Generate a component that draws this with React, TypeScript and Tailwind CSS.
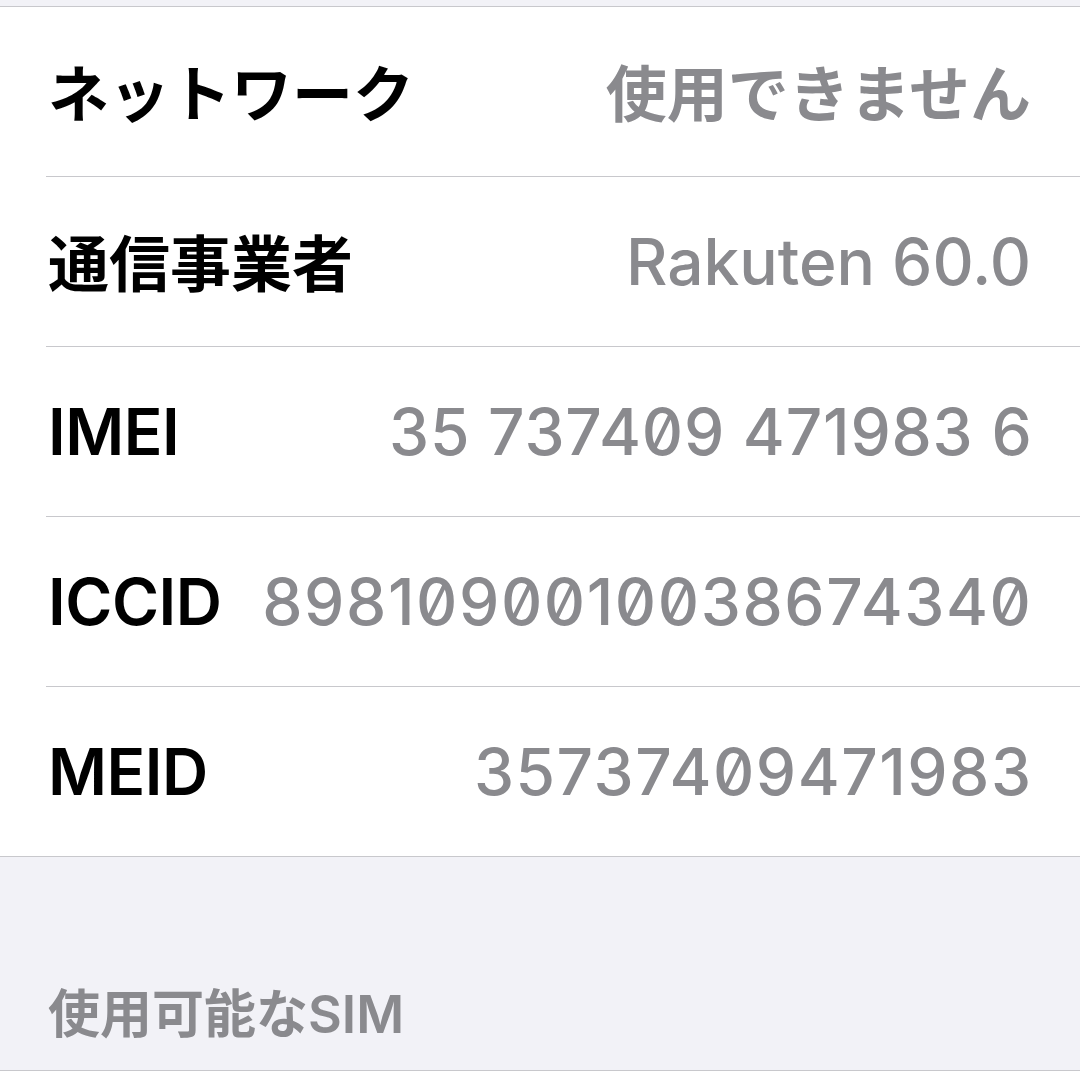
import React from "react";

const rows: { label: string; value: string; cjkLabel?: boolean; cjkValue?: boolean; track?: string }[] = [
  { label: "ネットワーク", value: "使用できません", cjkLabel: true, cjkValue: true },
  { label: "通信事業者", value: "Rakuten 60.0", cjkLabel: true },
  { label: "IMEI", value: "35 737409 471983 6", track: "slashed-zero tracking-[0.8px]" },
  { label: "ICCID", value: "8981090010038674340", track: "slashed-zero tracking-[1.6px]" },
  { label: "MEID", value: "35737409471983", track: "slashed-zero tracking-[1.5px]" },
];

export default function App() {
  return (
    <div
      className="w-[1080px] h-[1080px] bg-[#f2f2f7] overflow-hidden flex flex-col"
      style={{ fontFamily: "Inter, 'Noto Sans CJK JP', sans-serif" }}
    >
      <div className="h-[6px] shrink-0" />
      <div className="bg-white border-t border-b border-[#c8c8cc] shrink-0">
        {rows.map((r, i) => (
          <div key={r.label}>
            <div className="h-[169px] flex items-center justify-between pl-[48px] pr-[49px]">
              <span
                className={
                  r.cjkLabel
                    ? "text-[61px] font-bold text-black leading-none mt-[8px]"
                    : "text-[64px] font-semibold text-black leading-none tracking-[-0.5px]"
                }
              >
                {r.label}
              </span>
              <span
                className={
                  (r.cjkValue
                    ? "text-[61px] font-semibold leading-none mt-[8px]"
                    : "text-[64px] font-medium leading-none") +
                  (r.track ? " " + r.track + " mr-[-1.5px]" : "") +
                  " text-[#8a8a8e]"
                }
              >
                {r.value}
              </span>
            </div>
            {i < rows.length - 1 && <div className="ml-[46px] h-px bg-[#c8c8cc]" />}
          </div>
        ))}
      </div>
      <div className="h-[213px] shrink-0 flex items-end pl-[48px] pb-[29px]">
        <span className="text-[52px] font-semibold text-[#8a8a8e] leading-none">使用可能なSIM</span>
      </div>
      <div className="flex-1 bg-white border-t border-[#c8c8cc]" />
    </div>
  );
}
